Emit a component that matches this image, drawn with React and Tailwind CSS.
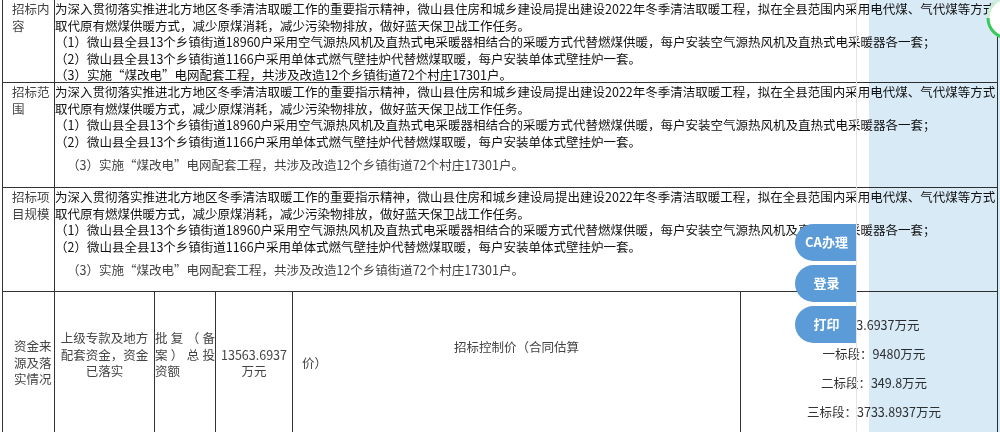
const intro = [
  "为深入贯彻落实推进北方地区冬季清洁取暖工作的重要指示精神，微山县住房和城乡建设局提出建设2022年冬季清洁取暖工程，拟在全县范围内采用电代煤、气代煤等方式",
  "取代原有燃煤供暖方式，减少原煤消耗，减少污染物排放，做好蓝天保卫战工作任务。",
  "（1）微山县全县13个乡镇街道18960户采用空气源热风机及直热式电采暖器相结合的采暖方式代替燃煤供暖，每户安装空气源热风机及直热式电采暖器各一套；",
  "（2）微山县全县13个乡镇街道1166户采用单体式燃气壁挂炉代替燃煤取暖，每户安装单体式壁挂炉一套。",
]
const lastLine = "（3）实施“煤改电”电网配套工程，共涉及改造12个乡镇街道72个村庄17301户。"

const TextRow = ({ label, loose, height }) => (
  <div className={`flex border-b border-[#333] ${height}`}>
    <div className="w-[52px] shrink-0 border-r border-[#333] pl-[9px] pr-[2px] pt-px text-[#444]">
      {label}
    </div>
    <div className="min-w-0 flex-1 pt-px text-[#111]">
      {intro.map((line) => (
        <div key={line} className="h-[16.5px] whitespace-nowrap">{line}</div>
      ))}
      {loose ? (
        <div className="mt-[7px] h-[16.5px] whitespace-nowrap pl-[12px] text-[#444]">{lastLine}</div>
      ) : (
        <div className="h-[16.5px] whitespace-nowrap">{lastLine}</div>
      )}
    </div>
  </div>
)

const App = () => {
  return (
    <div className="relative h-[432px] w-[1000px] overflow-hidden bg-white text-[12.5px] leading-[16.5px] font-['Noto_Sans_CJK_SC',sans-serif]">

      {/* Table */}
      <div className="ml-[2px] w-[996px] border-x border-[#333]">
        <TextRow label="招标内容" height="h-[83px]" />
        <TextRow label="招标范围" height="h-[105px]" loose />
        <TextRow label="招标项目规模" height="h-[104px]" loose />

        {/* Funding row */}
        <div className="flex h-[142px] text-[#444]">
          <div className="flex w-[52px] shrink-0 items-center border-r border-[#333] pl-[11px] pr-[2px]">
            资金来源及落实情况
          </div>
          <div className="flex w-[100px] shrink-0 items-center justify-center border-r border-[#333] px-[4px] pb-[16px] text-center">
            上级专款及地方配套资金，资金已落实
          </div>
          <div className="flex w-[61px] shrink-0 items-center border-r border-[#333] pb-[16px] text-justify">
            批复（备案）总投资额
          </div>
          <div className="flex w-[77px] shrink-0 items-center justify-center border-r border-[#333] text-center">
            13563.6937万元
          </div>
          <div className="flex w-[448px] shrink-0 flex-col justify-center border-r border-[#333] pb-[16px]">
            <div className="text-center">招标控制价（合同估算</div>
            <div className="pl-[9px]">价）</div>
          </div>
          <div className="flex-1 pl-[10px] pt-[18px] text-center leading-[29px] text-[#333]">
            <div>13563.6937万元</div>
            <div>一标段：9480万元</div>
            <div>二标段：349.8万元</div>
            <div>三标段：3733.8937万元</div>
          </div>
        </div>
      </div>

      {/* Side panel */}
      <div className="absolute left-[856px] top-0 h-full w-px bg-[#e4e4e4]"></div>
      <div className="absolute bottom-0 left-[869px] right-0 top-0 bg-[#d8eaf6] mix-blend-multiply"></div>

      {/* Floating buttons */}
      <div className="absolute left-[795px] top-[224px] flex flex-col gap-[4px]">
        {["CA办理", "登录", "打印"].map((t) => (
          <div
            key={t}
            className="flex h-[37px] w-[61px] items-center justify-center rounded-l-[19px] bg-[#5b9bd8] pl-[2px] text-[13px] font-bold text-white font-['Noto_Sans_CJK_SC',sans-serif]"
          >
            {t}
          </div>
        ))}
      </div>

      {/* Corner widget */}
      <svg className="absolute left-[984px] top-0" width="16" height="42" viewBox="0 0 16 42">
        <circle cx="24" cy="18" r="20" fill="#fff" stroke="#cdeed6" strokeWidth="3" />
        <path d="M4 18 A20 20 0 0 0 24 38" fill="none" stroke="#36c95b" strokeWidth="3" />
      </svg>
    </div>
  )
}

export default App
